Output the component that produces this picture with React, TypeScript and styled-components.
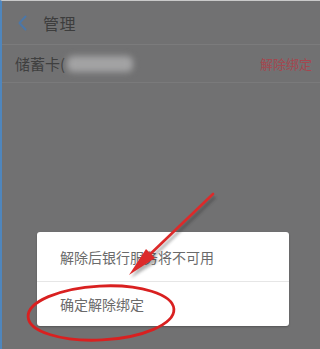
import styled, { createGlobalStyle } from 'styled-components';

const GlobalStyle = createGlobalStyle`
  html, body {
    margin: 0;
    padding: 0;
    background: #717171;
  }
  body {
    font-family: "Noto Sans CJK SC", "Noto Sans", sans-serif;
  }
`;

const Screen = styled.div`
  position: relative;
  width: 320px;
  height: 349px;
  box-sizing: border-box;
  overflow: hidden;
  display: flex;
  flex-direction: column;
  background: #717172;
  border-left: 2px solid #4f86bd;
  border-top: 1px solid #c9c9c9;
`;

const Header = styled.div`
  display: flex;
  align-items: center;
  gap: 16px;
  height: 43px;
  padding-left: 15px;
  border-bottom: 1px solid #7b7b7c;
`;

const Title = styled.span`
  font-size: 16px;
  color: #3d3d3d;
  letter-spacing: 0.5px;
`;

const CardRow = styled.div`
  display: flex;
  align-items: center;
  justify-content: space-between;
  height: 37px;
  padding: 0 8px 0 13px;
  border-bottom: 1px solid #7a7a7b;
`;

const CardName = styled.span`
  display: flex;
  align-items: center;
  font-size: 15px;
  color: #3f3f3f;
`;

const Masked = styled.span`
  display: inline-block;
  width: 66px;
  height: 16px;
  margin-left: 2px;
  background: #a3a3a4;
  border-radius: 6px;
  filter: blur(3px);
`;

const Unbind = styled.span`
  font-size: 13px;
  color: #a4474f;
`;

const Spacer = styled.div`
  flex: 1;
`;

const Sheet = styled.div`
  align-self: center;
  width: 252px;
  margin: 0 0 23px 4px;
  background: #ffffff;
  border-radius: 3px;
  box-shadow: 0 1px 2px rgba(0, 0, 0, 0.25);
  display: flex;
  flex-direction: column;
`;

const SheetItem = styled.div<{ $h: number; $divider?: boolean }>`
  height: ${(p) => p.$h}px;
  display: flex;
  align-items: center;
  padding-left: 23px;
  font-size: 14px;
  color: #6a6a6a;
  border-bottom: ${(p) => (p.$divider ? '1px solid #e6e6e6' : 'none')};
`;

const Annotation = styled.svg`
  position: absolute;
  left: -2px;
  top: -1px;
  width: 320px;
  height: 349px;
  pointer-events: none;
`;

function BackChevron() {
  return (
    <svg width="10" height="16" viewBox="0 0 10 16">
      <path d="M8.5 1.5 L2.5 8 L8.5 14.5" fill="none" stroke="#4b77a8" strokeWidth="2" strokeLinecap="round" strokeLinejoin="round" />
    </svg>
  );
}

export default function App() {
  return (
    <>
      <GlobalStyle />
      <Screen>
        <Header>
          <BackChevron />
          <Title>管理</Title>
        </Header>
        <CardRow>
          <CardName>
            储蓄卡(
            <Masked />
          </CardName>
          <Unbind>解除绑定</Unbind>
        </CardRow>
        <Spacer />
        <Sheet>
          <SheetItem $h={49} $divider>
            解除后银行服务将不可用
          </SheetItem>
          <SheetItem $h={44}>确定解除绑定</SheetItem>
        </Sheet>
        <Annotation viewBox="0 0 320 349">
          <defs>
            <filter id="sh" x="-20%" y="-20%" width="140%" height="140%">
              <feGaussianBlur stdDeviation="1.5" />
            </filter>
          </defs>
          <g opacity="0.35" filter="url(#sh)" transform="translate(2 3)">
            <line x1="213" y1="194" x2="142" y2="262" stroke="#222" strokeWidth="3" />
            <polygon points="129,275 147,248 156,258" fill="#222" />
          </g>
          <line x1="213" y1="194" x2="143" y2="261" stroke="#dc2a2a" strokeWidth="2.6" strokeLinecap="round" />
          <polygon points="129,275 146,249 155,258" fill="#dc2a2a" />
          <ellipse
            cx="101"
            cy="313"
            rx="73"
            ry="27"
            transform="rotate(-3 101 313)"
            fill="none"
            stroke="#d92020"
            strokeWidth="2.8"
          />
        </Annotation>
      </Screen>
    </>
  );
}
